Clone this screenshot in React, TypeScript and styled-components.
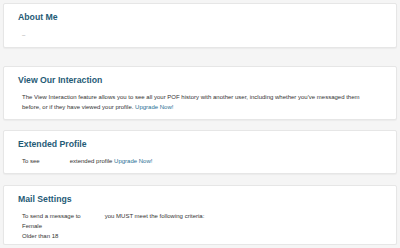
import React from "react";
import styled, { createGlobalStyle } from "styled-components";

const GlobalStyle = createGlobalStyle`
  html, body {
    margin: 0;
    padding: 0;
    background: #f5f5f5;
  }
  body {
    font-family: "Liberation Sans", Arial, sans-serif;
    -webkit-font-smoothing: antialiased;
  }
`;

const Page = styled.div`
  display: flex;
  flex-flow: column;
  padding: 3px 3px 0 3px;
  width: 394px;
`;

const Card = styled.section<{ $gap?: number }>`
  background: #fff;
  border: 1px solid #e6e6e6;
  border-radius: 2px;
  box-shadow: 0 1px 1px rgba(0, 0, 0, 0.04);
  box-sizing: border-box;
  padding: 7px 14px 0 14px;
  margin-bottom: ${(p) => p.$gap ?? 10}px;
`;

const Title = styled.h2`
  margin: 0;
  font-size: 8.7px;
  font-weight: 700;
  color: #1f5b76;
  line-height: 12px;
`;

const Body = styled.div<{ $height: number; $top: number }>`
  padding: ${(p) => p.$top}px 0 0 4px;
  font-size: 6px;
  line-height: 10px;
  color: #333;
  height: ${(p) => p.$height}px;
  box-sizing: border-box;
`;

const Line = styled.div`
  white-space: nowrap;
`;

const Faint = styled.span`
  color: #999;
`;

const Upgrade = styled.a`
  color: #2a6f93;
  text-decoration: none;
`;

const Gap = styled.span<{ $w: number }>`
  display: inline-block;
  width: ${(p) => p.$w}px;
`;

export default function App() {
  return (
    <>
      <GlobalStyle />
      <Page>
        <Card $gap={18}>
          <Title>About Me</Title>
          <Body $height={24} $top={7}>
            <Faint>–</Faint>
          </Body>
        </Card>
        <Card $gap={10}>
          <Title>View Our Interaction</Title>
          <Body $height={33} $top={6}>
            <Line>
              The View Interaction feature allows you to see all your POF history with another user,
              including whether you've messaged them
            </Line>
            <Line>
              before, or if they have viewed your profile. <Upgrade href="#">Upgrade Now!</Upgrade>
            </Line>
          </Body>
        </Card>
        <Card $gap={11}>
          <Title>Extended Profile</Title>
          <Body $height={23} $top={6}>
            <Line>
              To see<Gap $w={30} />extended profile <Upgrade href="#">Upgrade Now!</Upgrade>
            </Line>
          </Body>
        </Card>
        <Card $gap={0}>
          <Title>Mail Settings</Title>
          <Body $height={39} $top={6}>
            <Line>
              To send a message to<Gap $w={24} />you MUST meet the following criteria:
            </Line>
            <Line>Female</Line>
            <Line>Older than 18</Line>
          </Body>
        </Card>
      </Page>
    </>
  );
}
